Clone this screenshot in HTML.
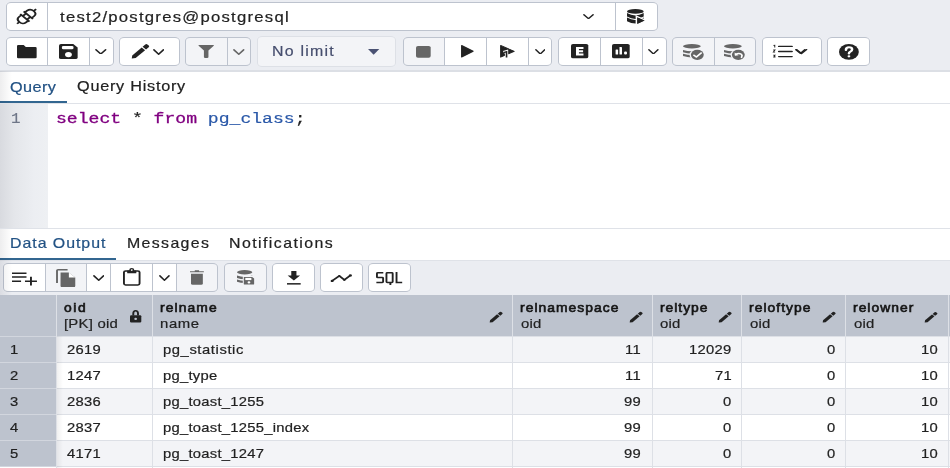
<!DOCTYPE html>
<html><head><meta charset="utf-8"><style>
html,body{margin:0;padding:0;}
body{width:950px;height:468px;overflow:hidden;position:relative;background:#fff;}
body>div,body>svg,body>p{position:absolute;box-sizing:border-box;margin:0;}
body>p{white-space:pre;transform-origin:0 0;will-change:transform;-webkit-text-stroke:0.2px currentColor;}
</style></head><body>
<div style="left:0.00px;top:0.00px;width:950.00px;height:72.00px;background:#ebedf2;border-bottom:2px solid #dcdfe5"></div>
<div style="left:0.00px;top:72.00px;width:950.00px;height:32.00px;background:#fff;border-bottom:1px solid #dfe2e8"></div>
<div style="left:0.00px;top:101.00px;width:67.00px;height:2.00px;background:#326690"></div>
<div style="left:0.00px;top:104.00px;width:950.00px;height:124.50px;background:#fff;border-bottom:1px solid #dfe2e8"></div>
<div style="left:0.00px;top:104.00px;width:48.00px;height:124.00px;background:linear-gradient(to right,#d8dadf 0px,#e4e6ea 14px,#eceef2 34px,#eef0f3 48px)"></div>
<div style="left:0.00px;top:228.50px;width:950.00px;height:32.50px;background:#fff;border-bottom:1px solid #dfe2e8"></div>
<div style="left:0.00px;top:258.20px;width:116.00px;height:1.80px;background:#326690"></div>
<div style="left:0.00px;top:261.00px;width:950.00px;height:34.30px;background:#ebedf2"></div>
<div style="left:5.50px;top:2.00px;width:42.00px;height:29.00px;background:#fff;border-top-left-radius:5px 4px;border-bottom-left-radius:5px 4px;"></div>
<div style="left:47.50px;top:2.00px;width:567.90px;height:29.00px;background:#fff;"></div>
<div style="left:615.40px;top:2.00px;width:42.40px;height:29.00px;background:#fff;border-top-right-radius:5px 4px;border-bottom-right-radius:5px 4px;"></div>
<div style="left:5.50px;top:2.00px;width:652.30px;height:29.00px;border:1px solid #bdc3ce;border-radius:5px/4px"></div>
<div style="left:47.00px;top:2.00px;width:1.00px;height:29.00px;background:#bdc3ce"></div>
<div style="left:614.90px;top:2.00px;width:1.00px;height:29.00px;background:#bdc3ce"></div>
<div style="left:5.70px;top:37.00px;width:41.60px;height:29.00px;background:#fff;border-top-left-radius:5px 4px;border-bottom-left-radius:5px 4px;"></div>
<div style="left:47.30px;top:37.00px;width:42.00px;height:29.00px;background:#fff;"></div>
<div style="left:89.30px;top:37.00px;width:24.50px;height:29.00px;background:#fff;border-top-right-radius:5px 4px;border-bottom-right-radius:5px 4px;"></div>
<div style="left:5.70px;top:37.00px;width:108.10px;height:29.00px;border:1px solid #bdc3ce;border-radius:5px/4px"></div>
<div style="left:46.80px;top:37.00px;width:1.00px;height:29.00px;background:#bdc3ce"></div>
<div style="left:88.80px;top:37.00px;width:1.00px;height:29.00px;background:#bdc3ce"></div>
<div style="left:119.20px;top:37.00px;width:60.60px;height:29.00px;background:#fff;border-radius:5px/4px;"></div>
<div style="left:119.20px;top:37.00px;width:60.60px;height:29.00px;border:1px solid #bdc3ce;border-radius:5px/4px"></div>
<div style="left:185.00px;top:37.00px;width:42.00px;height:29.00px;background:#f3f4f7;border-top-left-radius:5px 4px;border-bottom-left-radius:5px 4px;"></div>
<div style="left:227.00px;top:37.00px;width:24.00px;height:29.00px;background:#f3f4f7;border-top-right-radius:5px 4px;border-bottom-right-radius:5px 4px;"></div>
<div style="left:185.00px;top:37.00px;width:66.00px;height:29.00px;border:1px solid #bdc3ce;border-radius:5px/4px"></div>
<div style="left:226.50px;top:37.00px;width:1.00px;height:29.00px;background:#bdc3ce"></div>
<div style="left:257.10px;top:36.00px;width:139.40px;height:31.00px;background:#f3f4f7;border-radius:5px/4px;"></div>
<div style="left:257.10px;top:36.00px;width:139.40px;height:31.00px;border:1px solid #dde0e6;border-radius:5px/4px"></div>
<div style="left:402.80px;top:37.00px;width:41.60px;height:29.00px;background:#f3f4f7;border-top-left-radius:5px 4px;border-bottom-left-radius:5px 4px;"></div>
<div style="left:444.40px;top:37.00px;width:42.10px;height:29.00px;background:#fff;"></div>
<div style="left:486.50px;top:37.00px;width:42.00px;height:29.00px;background:#fff;"></div>
<div style="left:528.50px;top:37.00px;width:23.70px;height:29.00px;background:#fff;border-top-right-radius:5px 4px;border-bottom-right-radius:5px 4px;"></div>
<div style="left:402.80px;top:37.00px;width:149.40px;height:29.00px;border:1px solid #bdc3ce;border-radius:5px/4px"></div>
<div style="left:443.90px;top:37.00px;width:1.00px;height:29.00px;background:#bdc3ce"></div>
<div style="left:486.00px;top:37.00px;width:1.00px;height:29.00px;background:#bdc3ce"></div>
<div style="left:528.00px;top:37.00px;width:1.00px;height:29.00px;background:#bdc3ce"></div>
<div style="left:558.00px;top:37.00px;width:42.20px;height:29.00px;background:#fff;border-top-left-radius:5px 4px;border-bottom-left-radius:5px 4px;"></div>
<div style="left:600.20px;top:37.00px;width:41.90px;height:29.00px;background:#fff;"></div>
<div style="left:642.10px;top:37.00px;width:24.40px;height:29.00px;background:#fff;border-top-right-radius:5px 4px;border-bottom-right-radius:5px 4px;"></div>
<div style="left:558.00px;top:37.00px;width:108.50px;height:29.00px;border:1px solid #bdc3ce;border-radius:5px/4px"></div>
<div style="left:599.70px;top:37.00px;width:1.00px;height:29.00px;background:#bdc3ce"></div>
<div style="left:641.60px;top:37.00px;width:1.00px;height:29.00px;background:#bdc3ce"></div>
<div style="left:672.20px;top:37.00px;width:41.80px;height:29.00px;background:#f3f4f7;border-top-left-radius:5px 4px;border-bottom-left-radius:5px 4px;"></div>
<div style="left:714.00px;top:37.00px;width:42.20px;height:29.00px;background:#f3f4f7;border-top-right-radius:5px 4px;border-bottom-right-radius:5px 4px;"></div>
<div style="left:672.20px;top:37.00px;width:84.00px;height:29.00px;border:1px solid #bdc3ce;border-radius:5px/4px"></div>
<div style="left:713.50px;top:37.00px;width:1.00px;height:29.00px;background:#bdc3ce"></div>
<div style="left:761.60px;top:37.00px;width:60.40px;height:29.00px;background:#fff;border-radius:5px/4px;"></div>
<div style="left:761.60px;top:37.00px;width:60.40px;height:29.00px;border:1px solid #bdc3ce;border-radius:5px/4px"></div>
<div style="left:826.90px;top:37.00px;width:43.10px;height:29.00px;background:#fff;border-radius:5px/4px;"></div>
<div style="left:826.90px;top:37.00px;width:43.10px;height:29.00px;border:1px solid #bdc3ce;border-radius:5px/4px"></div>
<div style="left:2.90px;top:263.00px;width:42.10px;height:29.00px;background:#fff;border-top-left-radius:5px 4px;border-bottom-left-radius:5px 4px;"></div>
<div style="left:45.00px;top:263.00px;width:41.60px;height:29.00px;background:#f3f4f7;"></div>
<div style="left:86.60px;top:263.00px;width:23.80px;height:29.00px;background:#fff;"></div>
<div style="left:110.40px;top:263.00px;width:42.10px;height:29.00px;background:#fff;"></div>
<div style="left:152.50px;top:263.00px;width:24.20px;height:29.00px;background:#fff;"></div>
<div style="left:176.70px;top:263.00px;width:41.40px;height:29.00px;background:#f3f4f7;border-top-right-radius:5px 4px;border-bottom-right-radius:5px 4px;"></div>
<div style="left:2.90px;top:263.00px;width:215.20px;height:29.00px;border:1px solid #bdc3ce;border-radius:5px/4px"></div>
<div style="left:44.50px;top:263.00px;width:1.00px;height:29.00px;background:#bdc3ce"></div>
<div style="left:86.10px;top:263.00px;width:1.00px;height:29.00px;background:#bdc3ce"></div>
<div style="left:109.90px;top:263.00px;width:1.00px;height:29.00px;background:#bdc3ce"></div>
<div style="left:152.00px;top:263.00px;width:1.00px;height:29.00px;background:#bdc3ce"></div>
<div style="left:176.20px;top:263.00px;width:1.00px;height:29.00px;background:#bdc3ce"></div>
<div style="left:224.00px;top:263.00px;width:42.90px;height:29.00px;background:#f3f4f7;border-radius:5px/4px;"></div>
<div style="left:224.00px;top:263.00px;width:42.90px;height:29.00px;border:1px solid #bdc3ce;border-radius:5px/4px"></div>
<div style="left:271.70px;top:263.00px;width:43.20px;height:29.00px;background:#fff;border-radius:5px/4px;"></div>
<div style="left:271.70px;top:263.00px;width:43.20px;height:29.00px;border:1px solid #bdc3ce;border-radius:5px/4px"></div>
<div style="left:320.00px;top:263.00px;width:42.90px;height:29.00px;background:#fff;border-radius:5px/4px;"></div>
<div style="left:320.00px;top:263.00px;width:42.90px;height:29.00px;border:1px solid #bdc3ce;border-radius:5px/4px"></div>
<div style="left:367.70px;top:263.00px;width:43.20px;height:29.00px;background:#fff;border-radius:5px/4px;"></div>
<div style="left:367.70px;top:263.00px;width:43.20px;height:29.00px;border:1px solid #bdc3ce;border-radius:5px/4px"></div>
<div style="left:0.00px;top:295.30px;width:950.00px;height:40.70px;background:#bdc3ce"></div>
<div style="left:56.00px;top:337.00px;width:894.00px;height:26.00px;background:#f3f4f7"></div>
<div style="left:0.00px;top:337.00px;width:56.00px;height:26.00px;background:#bdc3ce"></div>
<div style="left:56.00px;top:363.00px;width:894.00px;height:26.00px;background:#fff"></div>
<div style="left:0.00px;top:363.00px;width:56.00px;height:26.00px;background:#bdc3ce"></div>
<div style="left:56.00px;top:389.00px;width:894.00px;height:26.00px;background:#f3f4f7"></div>
<div style="left:0.00px;top:389.00px;width:56.00px;height:26.00px;background:#bdc3ce"></div>
<div style="left:56.00px;top:415.00px;width:894.00px;height:26.00px;background:#fff"></div>
<div style="left:0.00px;top:415.00px;width:56.00px;height:26.00px;background:#bdc3ce"></div>
<div style="left:56.00px;top:441.00px;width:894.00px;height:26.00px;background:#f3f4f7"></div>
<div style="left:0.00px;top:441.00px;width:56.00px;height:26.00px;background:#bdc3ce"></div>
<div style="left:56.00px;top:335.50px;width:894.00px;height:1.00px;background:#dde0e6"></div>
<div style="left:0.00px;top:335.50px;width:56.00px;height:1.00px;background:#d2d6de"></div>
<div style="left:56.00px;top:361.50px;width:894.00px;height:1.00px;background:#dde0e6"></div>
<div style="left:0.00px;top:361.50px;width:56.00px;height:1.00px;background:#d2d6de"></div>
<div style="left:56.00px;top:387.50px;width:894.00px;height:1.00px;background:#dde0e6"></div>
<div style="left:0.00px;top:387.50px;width:56.00px;height:1.00px;background:#d2d6de"></div>
<div style="left:56.00px;top:413.50px;width:894.00px;height:1.00px;background:#dde0e6"></div>
<div style="left:0.00px;top:413.50px;width:56.00px;height:1.00px;background:#d2d6de"></div>
<div style="left:56.00px;top:439.50px;width:894.00px;height:1.00px;background:#dde0e6"></div>
<div style="left:0.00px;top:439.50px;width:56.00px;height:1.00px;background:#d2d6de"></div>
<div style="left:56.00px;top:465.50px;width:894.00px;height:1.00px;background:#dde0e6"></div>
<div style="left:0.00px;top:465.50px;width:56.00px;height:1.00px;background:#d2d6de"></div>
<div style="left:55.50px;top:295.30px;width:1.00px;height:172.70px;background:#dde0e6"></div>
<div style="left:152.00px;top:295.30px;width:1.00px;height:172.70px;background:#dde0e6"></div>
<div style="left:512.20px;top:295.30px;width:1.00px;height:172.70px;background:#dde0e6"></div>
<div style="left:652.20px;top:295.30px;width:1.00px;height:172.70px;background:#dde0e6"></div>
<div style="left:741.10px;top:295.30px;width:1.00px;height:172.70px;background:#dde0e6"></div>
<div style="left:845.10px;top:295.30px;width:1.00px;height:172.70px;background:#dde0e6"></div>
<div style="left:947.50px;top:295.30px;width:1.00px;height:172.70px;background:#dde0e6"></div>
<div style="left:56.50px;top:336.00px;width:6.50px;height:132.00px;background:linear-gradient(to right,rgba(0,0,0,0.06),rgba(0,0,0,0))"></div>
<div style="left:0.00px;top:71.30px;width:12.00px;height:32.20px;background:linear-gradient(to right,rgba(0,0,20,0.07),rgba(0,0,0,0))"></div>
<div style="left:0.00px;top:229.00px;width:12.00px;height:66.30px;background:linear-gradient(to right,rgba(0,0,20,0.07),rgba(0,0,0,0))"></div>
<p style="left:59.72px;top:9.90px;font:400 14.9px 'Liberation Sans', sans-serif;line-height:14.9px;color:#222222;letter-spacing:1.116px;transform:scaleX(1.1200)">test2/postgres@postgresql</p>
<p style="left:271.84px;top:43.90px;font:400 14.2px 'Liberation Sans', sans-serif;line-height:14.2px;color:#464e6e;letter-spacing:1.115px;transform:scaleX(1.1200)">No limit</p>
<p style="left:10.10px;top:79.50px;font:400 14.5px 'Liberation Sans', sans-serif;line-height:14.5px;color:#225284;letter-spacing:0.371px;transform:scaleX(1.1200)">Query</p>
<p style="left:77.10px;top:79.20px;font:400 14.5px 'Liberation Sans', sans-serif;line-height:14.5px;color:#222222;letter-spacing:0.665px;transform:scaleX(1.1200)">Query History</p>
<p style="left:10.44px;top:236.20px;font:400 14.2px 'Liberation Sans', sans-serif;line-height:14.2px;color:#225284;letter-spacing:0.864px;transform:scaleX(1.1200)">Data Output</p>
<p style="left:126.74px;top:236.20px;font:400 14.2px 'Liberation Sans', sans-serif;line-height:14.2px;color:#222222;letter-spacing:1.212px;transform:scaleX(1.1200)">Messages</p>
<p style="left:229.04px;top:236.20px;font:400 14.2px 'Liberation Sans', sans-serif;line-height:14.2px;color:#222222;letter-spacing:1.284px;transform:scaleX(1.1200)">Notifications</p>
<p style="left:11.25px;top:112.10px;font:400 15.5px 'Liberation Mono', monospace;line-height:15.5px;color:#6e7687;transform:scaleX(1.0267)">1</p>
<p style="left:55.94px;top:112.10px;font:400 15.5px 'Liberation Mono', monospace;line-height:15.5px;color:#222222;transform:scaleX(1.1660)"><span style="color:#800080;-webkit-text-stroke:0.3px #800080">select</span> * <span style="color:#800080;-webkit-text-stroke:0.3px #800080">from</span> <span style="color:#2a58a8">pg_class</span>;</p>
<p style="left:64.49px;top:300.60px;font:400 13.6px 'Liberation Sans', sans-serif;line-height:13.6px;color:#151515;letter-spacing:1.527px;-webkit-text-stroke:0.65px #151515;transform:scaleX(1.0200)">oid</p>
<p style="left:64.02px;top:317.00px;font:400 13.3px 'Liberation Sans', sans-serif;line-height:13.3px;color:#222222;letter-spacing:0.196px;transform:scaleX(1.1200)">[PK] oid</p>
<p style="left:160.01px;top:300.60px;font:400 13.6px 'Liberation Sans', sans-serif;line-height:13.6px;color:#151515;letter-spacing:1.066px;-webkit-text-stroke:0.65px #151515;transform:scaleX(1.0200)">relname</p>
<p style="left:159.92px;top:317.00px;font:400 13.3px 'Liberation Sans', sans-serif;line-height:13.3px;color:#222222;letter-spacing:0.565px;transform:scaleX(1.1200)">name</p>
<p style="left:520.41px;top:300.60px;font:400 13.6px 'Liberation Sans', sans-serif;line-height:13.6px;color:#151515;letter-spacing:1.018px;-webkit-text-stroke:0.65px #151515;transform:scaleX(1.0200)">relnamespace</p>
<p style="left:520.74px;top:317.00px;font:400 13.3px 'Liberation Sans', sans-serif;line-height:13.3px;color:#222222;letter-spacing:0.133px;transform:scaleX(1.1200)">oid</p>
<p style="left:660.11px;top:300.60px;font:400 13.6px 'Liberation Sans', sans-serif;line-height:13.6px;color:#151515;letter-spacing:0.954px;-webkit-text-stroke:0.65px #151515;transform:scaleX(1.0200)">reltype</p>
<p style="left:660.44px;top:317.00px;font:400 13.3px 'Liberation Sans', sans-serif;line-height:13.3px;color:#222222;letter-spacing:0.133px;transform:scaleX(1.1200)">oid</p>
<p style="left:749.41px;top:300.60px;font:400 13.6px 'Liberation Sans', sans-serif;line-height:13.6px;color:#151515;letter-spacing:1.018px;-webkit-text-stroke:0.65px #151515;transform:scaleX(1.0200)">reloftype</p>
<p style="left:749.74px;top:317.00px;font:400 13.3px 'Liberation Sans', sans-serif;line-height:13.3px;color:#222222;letter-spacing:0.133px;transform:scaleX(1.1200)">oid</p>
<p style="left:853.21px;top:300.60px;font:400 13.6px 'Liberation Sans', sans-serif;line-height:13.6px;color:#151515;letter-spacing:1.002px;-webkit-text-stroke:0.65px #151515;transform:scaleX(1.0200)">relowner</p>
<p style="left:853.54px;top:317.00px;font:400 13.3px 'Liberation Sans', sans-serif;line-height:13.3px;color:#222222;letter-spacing:0.133px;transform:scaleX(1.1200)">oid</p>
<p style="left:9.98px;top:342.70px;font:400 13.2px 'Liberation Sans', sans-serif;line-height:13.2px;color:#222222;letter-spacing:0.236px;transform:scaleX(1.1200)">1</p>
<p style="left:66.90px;top:342.70px;font:400 13.2px 'Liberation Sans', sans-serif;line-height:13.2px;color:#222222;letter-spacing:0.236px;transform:scaleX(1.1200)">2619</p>
<p style="left:162.72px;top:342.70px;font:400 13.2px 'Liberation Sans', sans-serif;line-height:13.2px;color:#222222;letter-spacing:0.523px;transform:scaleX(1.1200)">pg_statistic</p>
<p style="left:625.04px;top:342.70px;font:400 13.2px 'Liberation Sans', sans-serif;line-height:13.2px;color:#222222;letter-spacing:0.236px;transform:scaleX(1.1200)">11</p>
<p style="left:688.98px;top:342.70px;font:400 13.2px 'Liberation Sans', sans-serif;line-height:13.2px;color:#222222;letter-spacing:0.236px;transform:scaleX(1.1200)">12029</p>
<p style="left:826.70px;top:342.70px;font:400 13.2px 'Liberation Sans', sans-serif;line-height:13.2px;color:#222222;letter-spacing:0.236px;transform:scaleX(1.1200)">0</p>
<p style="left:920.62px;top:342.70px;font:400 13.2px 'Liberation Sans', sans-serif;line-height:13.2px;color:#222222;letter-spacing:0.236px;transform:scaleX(1.1200)">10</p>
<p style="left:9.98px;top:368.70px;font:400 13.2px 'Liberation Sans', sans-serif;line-height:13.2px;color:#222222;letter-spacing:0.236px;transform:scaleX(1.1200)">2</p>
<p style="left:66.90px;top:368.70px;font:400 13.2px 'Liberation Sans', sans-serif;line-height:13.2px;color:#222222;letter-spacing:0.236px;transform:scaleX(1.1200)">1247</p>
<p style="left:162.72px;top:368.70px;font:400 13.2px 'Liberation Sans', sans-serif;line-height:13.2px;color:#222222;letter-spacing:0.236px;transform:scaleX(1.1200)">pg_type</p>
<p style="left:625.04px;top:368.70px;font:400 13.2px 'Liberation Sans', sans-serif;line-height:13.2px;color:#222222;letter-spacing:0.236px;transform:scaleX(1.1200)">11</p>
<p style="left:714.56px;top:368.70px;font:400 13.2px 'Liberation Sans', sans-serif;line-height:13.2px;color:#222222;letter-spacing:0.236px;transform:scaleX(1.1200)">71</p>
<p style="left:826.70px;top:368.70px;font:400 13.2px 'Liberation Sans', sans-serif;line-height:13.2px;color:#222222;letter-spacing:0.236px;transform:scaleX(1.1200)">0</p>
<p style="left:920.62px;top:368.70px;font:400 13.2px 'Liberation Sans', sans-serif;line-height:13.2px;color:#222222;letter-spacing:0.236px;transform:scaleX(1.1200)">10</p>
<p style="left:9.98px;top:394.70px;font:400 13.2px 'Liberation Sans', sans-serif;line-height:13.2px;color:#222222;letter-spacing:0.236px;transform:scaleX(1.1200)">3</p>
<p style="left:66.90px;top:394.70px;font:400 13.2px 'Liberation Sans', sans-serif;line-height:13.2px;color:#222222;letter-spacing:0.236px;transform:scaleX(1.1200)">2836</p>
<p style="left:162.72px;top:394.70px;font:400 13.2px 'Liberation Sans', sans-serif;line-height:13.2px;color:#222222;letter-spacing:0.236px;transform:scaleX(1.1200)">pg_toast_1255</p>
<p style="left:623.92px;top:394.70px;font:400 13.2px 'Liberation Sans', sans-serif;line-height:13.2px;color:#222222;letter-spacing:0.236px;transform:scaleX(1.1200)">99</p>
<p style="left:722.80px;top:394.70px;font:400 13.2px 'Liberation Sans', sans-serif;line-height:13.2px;color:#222222;letter-spacing:0.236px;transform:scaleX(1.1200)">0</p>
<p style="left:826.70px;top:394.70px;font:400 13.2px 'Liberation Sans', sans-serif;line-height:13.2px;color:#222222;letter-spacing:0.236px;transform:scaleX(1.1200)">0</p>
<p style="left:920.62px;top:394.70px;font:400 13.2px 'Liberation Sans', sans-serif;line-height:13.2px;color:#222222;letter-spacing:0.236px;transform:scaleX(1.1200)">10</p>
<p style="left:9.98px;top:420.70px;font:400 13.2px 'Liberation Sans', sans-serif;line-height:13.2px;color:#222222;letter-spacing:0.236px;transform:scaleX(1.1200)">4</p>
<p style="left:66.90px;top:420.70px;font:400 13.2px 'Liberation Sans', sans-serif;line-height:13.2px;color:#222222;letter-spacing:0.236px;transform:scaleX(1.1200)">2837</p>
<p style="left:162.72px;top:420.70px;font:400 13.2px 'Liberation Sans', sans-serif;line-height:13.2px;color:#222222;letter-spacing:0.236px;transform:scaleX(1.1200)">pg_toast_1255_index</p>
<p style="left:623.92px;top:420.70px;font:400 13.2px 'Liberation Sans', sans-serif;line-height:13.2px;color:#222222;letter-spacing:0.236px;transform:scaleX(1.1200)">99</p>
<p style="left:722.80px;top:420.70px;font:400 13.2px 'Liberation Sans', sans-serif;line-height:13.2px;color:#222222;letter-spacing:0.236px;transform:scaleX(1.1200)">0</p>
<p style="left:826.70px;top:420.70px;font:400 13.2px 'Liberation Sans', sans-serif;line-height:13.2px;color:#222222;letter-spacing:0.236px;transform:scaleX(1.1200)">0</p>
<p style="left:920.62px;top:420.70px;font:400 13.2px 'Liberation Sans', sans-serif;line-height:13.2px;color:#222222;letter-spacing:0.236px;transform:scaleX(1.1200)">10</p>
<p style="left:9.98px;top:446.70px;font:400 13.2px 'Liberation Sans', sans-serif;line-height:13.2px;color:#222222;letter-spacing:0.236px;transform:scaleX(1.1200)">5</p>
<p style="left:66.90px;top:446.70px;font:400 13.2px 'Liberation Sans', sans-serif;line-height:13.2px;color:#222222;letter-spacing:0.236px;transform:scaleX(1.1200)">4171</p>
<p style="left:162.72px;top:446.70px;font:400 13.2px 'Liberation Sans', sans-serif;line-height:13.2px;color:#222222;letter-spacing:0.236px;transform:scaleX(1.1200)">pg_toast_1247</p>
<p style="left:623.92px;top:446.70px;font:400 13.2px 'Liberation Sans', sans-serif;line-height:13.2px;color:#222222;letter-spacing:0.236px;transform:scaleX(1.1200)">99</p>
<p style="left:722.80px;top:446.70px;font:400 13.2px 'Liberation Sans', sans-serif;line-height:13.2px;color:#222222;letter-spacing:0.236px;transform:scaleX(1.1200)">0</p>
<p style="left:826.70px;top:446.70px;font:400 13.2px 'Liberation Sans', sans-serif;line-height:13.2px;color:#222222;letter-spacing:0.236px;transform:scaleX(1.1200)">0</p>
<p style="left:920.62px;top:446.70px;font:400 13.2px 'Liberation Sans', sans-serif;line-height:13.2px;color:#222222;letter-spacing:0.236px;transform:scaleX(1.1200)">10</p>
<svg style="left:582.90px;top:14.00px;width:11.00px;height:5.40px;" viewBox="0 0 12 7" preserveAspectRatio="none"><path d="M1 1 L6 6 L11 1" fill="none" stroke="#222" stroke-width="1.7" stroke-linecap="round" stroke-linejoin="round"/></svg>
<svg style="left:95.30px;top:48.70px;width:11.60px;height:5.80px;" viewBox="0 0 12 7" preserveAspectRatio="none"><path d="M1 1 L6 6 L11 1" fill="none" stroke="#222" stroke-width="1.7" stroke-linecap="round" stroke-linejoin="round"/></svg>
<svg style="left:152.60px;top:48.70px;width:11.30px;height:6.10px;" viewBox="0 0 12 7" preserveAspectRatio="none"><path d="M1 1 L6 6 L11 1" fill="none" stroke="#222" stroke-width="1.7" stroke-linecap="round" stroke-linejoin="round"/></svg>
<svg style="left:233.40px;top:48.70px;width:11.60px;height:6.10px;" viewBox="0 0 12 7" preserveAspectRatio="none"><path d="M1 1 L6 6 L11 1" fill="none" stroke="#666" stroke-width="1.7" stroke-linecap="round" stroke-linejoin="round"/></svg>
<svg style="left:534.60px;top:48.70px;width:10.60px;height:5.80px;" viewBox="0 0 12 7" preserveAspectRatio="none"><path d="M1 1 L6 6 L11 1" fill="none" stroke="#222" stroke-width="1.7" stroke-linecap="round" stroke-linejoin="round"/></svg>
<svg style="left:648.40px;top:48.60px;width:10.80px;height:5.70px;" viewBox="0 0 12 7" preserveAspectRatio="none"><path d="M1 1 L6 6 L11 1" fill="none" stroke="#222" stroke-width="1.7" stroke-linecap="round" stroke-linejoin="round"/></svg>
<svg style="left:795.40px;top:49.30px;width:10.60px;height:5.10px;" viewBox="0 0 12 7" preserveAspectRatio="none"><path d="M1 1 L6 6 L11 1" fill="none" stroke="#222" stroke-width="1.7" stroke-linecap="round" stroke-linejoin="round"/></svg>
<svg style="left:92.60px;top:274.70px;width:11.50px;height:6.10px;" viewBox="0 0 12 7" preserveAspectRatio="none"><path d="M1 1 L6 6 L11 1" fill="none" stroke="#222" stroke-width="1.7" stroke-linecap="round" stroke-linejoin="round"/></svg>
<svg style="left:158.90px;top:274.70px;width:10.90px;height:6.10px;" viewBox="0 0 12 7" preserveAspectRatio="none"><path d="M1 1 L6 6 L11 1" fill="none" stroke="#222" stroke-width="1.7" stroke-linecap="round" stroke-linejoin="round"/></svg>
<svg style="left:16.30px;top:8.40px;width:20.30px;height:16.20px;overflow:visible" viewBox="0 0 16.111 16.200" preserveAspectRatio="none"><g transform="translate(8.4,8.5) rotate(-44)" fill="none" stroke="#222" stroke-width="1.65" stroke-linecap="butt">
<path d="M1.9,-3.9 H4.4 Q7.9,-3.9 7.9,0 Q7.9,3.9 4.4,3.9 H1.9"/>
<path d="M-1.9,-3.9 H-4.4 Q-7.9,-3.9 -7.9,0 Q-7.9,3.9 -4.4,3.9 H-1.9"/>
<path d="M1.9,-5.3 V5.3 M-1.9,-5.3 V5.3 M-1.9,-2.4 H1.9 M-1.9,2.4 H1.9 M7.9,0 H10.5 M-7.9,0 H-10.5"/>
</g></svg>
<svg style="left:627.00px;top:8.70px;width:18.20px;height:15.60px;overflow:visible" viewBox="0 0 14.444 15.600" preserveAspectRatio="none"><ellipse cx="6.63" cy="2.4" rx="6.63" ry="2.4" fill="#222"/>
<path fill="#222" d="M0,4.0 Q6.63,8.8 13.26,4.0 V7.5 Q6.63,12.3 0,7.5 Z"/>
<path fill="#222" d="M0,8.6 Q6.63,13.4 13.26,8.6 V12.2 Q6.63,17 0,12.2 Z"/>
<path fill="#222" stroke="#fff" stroke-width="1.5" stroke-linejoin="miter" d="M7.6,7.3 L14.9,11.6 L7.6,15.9 Z"/>
<path fill="#222" d="M8.1,8.2 L14.1,11.6 L8.1,15 Z"/></svg>
<svg style="left:16.60px;top:44.70px;width:19.70px;height:13.30px;overflow:visible" viewBox="0 0 15.635 13.300" preserveAspectRatio="none"><path fill="#222" d="M1,0 H5.3 L7,1.9 H14.6 Q15.6,1.9 15.6,2.9 V12.3 Q15.6,13.3 14.6,13.3 H1 Q0,13.3 0,12.3 V1 Q0,0 1,0 Z"/></svg>
<svg style="left:58.80px;top:44.10px;width:18.60px;height:15.10px;overflow:visible" viewBox="0 0 14.762 15.100" preserveAspectRatio="none"><path fill="#222" d="M1.6,0 H11.3 L14.8,3.4 V13.4 Q14.8,15.1 13.2,15.1 H1.6 Q0,15.1 0,13.4 V1.6 Q0,0 1.6,0 Z"/>
<rect x="2.3" y="1.9" width="9.2" height="3.4" rx="1.2" fill="#fff"/>
<circle cx="7.5" cy="10.6" r="2.7" fill="#fff"/></svg>
<svg style="left:131.00px;top:43.90px;width:18.00px;height:15.20px;overflow:visible" viewBox="0 0 14.286 15.200" preserveAspectRatio="none"><g transform="translate(0.4,14.800) rotate(-46.5) scale(0.940)" fill="#222">
<path d="M0.3,0 L3,-2.0 H14.6 V2.0 H3 Z"/>
<path d="M15.7,-2.0 H19 Q20.3,-2.0 20.3,-0.8 V0.8 Q20.3,2.0 19,2.0 H15.7 Z"/></g></svg>
<svg style="left:198.00px;top:44.90px;width:16.40px;height:13.00px;overflow:visible" viewBox="0 0 13.016 13.000" preserveAspectRatio="none"><path fill="#666" d="M0.8,0 H12.2 Q13,0 12.5,0.7 L8.3,5.6 V12 Q8.3,13 7.3,13 H5.7 Q4.7,13 4.7,12 V5.6 L0.5,0.7 Q0,0 0.8,0 Z"/></svg>
<svg style="left:367.50px;top:49.00px;width:11.30px;height:5.70px;overflow:visible" viewBox="0 0 8.968 5.700" preserveAspectRatio="none"><path fill="#4a5273" d="M0,0 H8.97 L4.48,5.7 Z"/></svg>
<svg style="left:416.30px;top:45.50px;width:14.70px;height:11.70px;overflow:visible" viewBox="0 0 11.667 11.700" preserveAspectRatio="none"><rect x="0" y="0" width="11.67" height="11.7" rx="1.6" fill="#666"/></svg>
<svg style="left:460.70px;top:45.00px;width:12.70px;height:12.50px;overflow:visible" viewBox="0 0 10.079 12.500" preserveAspectRatio="none"><path fill="#222" stroke="#222" stroke-width="0.9" stroke-linejoin="round" d="M0.5,0.5 L9.6,6.25 L0.5,12 Z"/></svg>
<svg style="left:500.30px;top:45.00px;width:14.70px;height:12.60px;overflow:visible" viewBox="0 0 11.667 12.600" preserveAspectRatio="none"><path fill="#222" stroke="#222" stroke-width="0.8" stroke-linejoin="round" d="M0.5,0.4 L11.3,6.3 L0.5,12.2 Z"/>
<path fill="none" stroke="#fff" stroke-width="2.6" d="M2.8,7.3 L5.2,6.4 V13"/>
<path fill="none" stroke="#222" stroke-width="1.3" d="M2.8,7.6 L5.2,6.7 V12.6"/></svg>
<svg style="left:570.70px;top:44.20px;width:17.30px;height:14.30px;overflow:visible" viewBox="0 0 13.730 14.300" preserveAspectRatio="none"><rect x="0" y="0" width="13.73" height="14.3" rx="1.6" fill="#222"/>
<path fill="#fff" d="M3.97,2.9 H9.9 V5 H6.3 V6.2 H9.6 V8.2 H6.3 V9.5 H9.9 V11.5 H3.97 Z"/></svg>
<svg style="left:612.20px;top:44.20px;width:17.70px;height:14.30px;overflow:visible" viewBox="0 0 14.048 14.300" preserveAspectRatio="none"><rect x="0" y="0" width="14.05" height="14.3" rx="1.6" fill="#222"/>
<rect x="2.86" y="5.4" width="1.98" height="5" rx="0.5" fill="#fff"/>
<rect x="5.95" y="2.9" width="1.98" height="7.5" rx="0.5" fill="#fff"/>
<rect x="9.6" y="7.5" width="2.3" height="2.9" rx="0.9" fill="#fff"/></svg>
<svg style="left:682.90px;top:43.60px;width:22.68px;height:16.50px;overflow:visible" viewBox="0 0 18.000 16.500" preserveAspectRatio="none"><path fill="#666" d="M0,2.25 A7.06,2.25 0 0 1 14.12,2.25 A7.06,2.25 0 0 1 0,2.25 Z"/>
<path fill="#666" d="M0,5.9 Q7,8.6 14.12,5.9 V8.3 Q7,11 0,8.3 Z"/>
<path fill="#666" d="M0,9.7 Q7,12.4 14.12,9.7 V12.1 Q7,14.8 0,12.1 Z"/>
<circle cx="11.37" cy="10.8" r="6.2" fill="#f3f4f7"/>
<circle cx="11.37" cy="10.8" r="5.1" fill="#666"/><path d="M8.7,11.2 L10.6,13 L14.4,9" fill="none" stroke="#fff" stroke-width="1.5" stroke-linecap="round" stroke-linejoin="round"/></svg>
<svg style="left:724.20px;top:43.60px;width:22.68px;height:16.50px;overflow:visible" viewBox="0 0 18.000 16.500" preserveAspectRatio="none"><path fill="#666" d="M0,2.25 A7.06,2.25 0 0 1 14.12,2.25 A7.06,2.25 0 0 1 0,2.25 Z"/>
<path fill="#666" d="M0,5.9 Q7,8.6 14.12,5.9 V8.3 Q7,11 0,8.3 Z"/>
<path fill="#666" d="M0,9.7 Q7,12.4 14.12,9.7 V12.1 Q7,14.8 0,12.1 Z"/>
<circle cx="11.37" cy="10.8" r="6.2" fill="#f3f4f7"/>
<circle cx="11.37" cy="10.8" r="5.1" fill="#666"/><path d="M9.3,10.6 Q11.5,8.6 13.8,10.3 Q14.8,11.6 13.9,13.4" fill="none" stroke="#fff" stroke-width="1.4" stroke-linecap="round"/><path d="M8.4,8.5 L8.6,11.8 L11.6,11.3 Z" fill="#fff"/></svg>
<svg style="left:772.50px;top:45.00px;width:34.00px;height:12.50px;overflow:visible" viewBox="0 0 26.984 12.500" preserveAspectRatio="none"><g fill="none" stroke="#222">
<path d="M4.6,1.4 H15.1 M4.6,6.5 H15.1 M4.6,11.6 H15.1" stroke-width="1.4" stroke-linecap="round"/>
<path d="M0.3,0.4 L1.4,0.2 V2.4 M0.2,5 H1.6 L0.3,7.1 H1.7 M0.2,10.2 H1.6 L1,11 Q1.7,11.4 1.6,12 H0.2" stroke-width="0.8"/>
<path d="M18.6,4.6 L22.6,8.6 L26.6,4.6" stroke-width="1.35" stroke-linecap="round" stroke-linejoin="round"/>
</g></svg>
<svg style="left:838.70px;top:43.60px;width:19.80px;height:15.80px;overflow:visible" viewBox="0 0 15.714 15.800" preserveAspectRatio="none"><ellipse cx="7.86" cy="7.9" rx="7.86" ry="7.9" fill="#222"/>
<path d="M5.5,5.9 Q5.5,3.3 7.9,3.3 Q10.4,3.3 10.4,5.6 Q10.4,7 8.8,7.8 Q7.9,8.3 7.9,9.6" fill="none" stroke="#fff" stroke-width="2" stroke-linecap="round"/>
<circle cx="7.9" cy="12.3" r="1.15" fill="#fff"/></svg>
<svg style="left:11.50px;top:271.50px;width:25.00px;height:14.50px;overflow:visible" viewBox="0 0 19.841 14.500" preserveAspectRatio="none"><g stroke="#222" stroke-width="1.5" fill="none">
<path d="M0,1.2 H11.5 M0,5 H11.5 M0,9.3 H7.2"/>
<path d="M10.3,9.3 H19.8 M15.05,4.8 V13.6"/></g></svg>
<svg style="left:55.70px;top:268.70px;width:19.30px;height:18.10px;overflow:visible" viewBox="0 0 15.317 18.100" preserveAspectRatio="none"><path d="M0.8,14 V1.6 Q0.8,0.8 1.6,0.8 H9.2" fill="none" stroke="#666" stroke-width="1.5"/>
<path fill="#666" d="M3.6,3.6 H10 L15.3,8.5 V16.9 Q15.3,18.1 14.1,18.1 H4.8 Q3.6,18.1 3.6,16.9 Z"/>
<path fill="#fff" d="M10.2,3.6 L15.3,8.4 H10.2 Z"/></svg>
<svg style="left:122.60px;top:268.00px;width:17.50px;height:17.60px;overflow:visible" viewBox="0 0 13.889 17.600" preserveAspectRatio="none"><rect x="0.75" y="2.9" width="12.4" height="14" rx="1.3" fill="none" stroke="#222" stroke-width="1.5"/>
<rect x="3.3" y="2.4" width="7.3" height="2.8" rx="0.5" fill="#222"/>
<circle cx="6.95" cy="2.1" r="2.0" fill="#222"/><circle cx="6.95" cy="2.1" r="0.8" fill="#fff"/></svg>
<svg style="left:190.40px;top:270.20px;width:13.90px;height:14.80px;overflow:visible" viewBox="0 0 11.032 14.800" preserveAspectRatio="none"><path fill="#666" d="M0,1.2 H11 V2.3 H0 Z M3.8,0.2 H7.2 V1.3 H3.8 Z"/>
<path fill="#666" d="M0.8,3.7 H10.2 V13.5 Q10.2,14.8 8.9,14.8 H2.1 Q0.8,14.8 0.8,13.5 Z"/></svg>
<svg style="left:237.00px;top:270.10px;width:17.60px;height:14.90px;overflow:visible" viewBox="0 0 13.968 14.900" preserveAspectRatio="none"><path fill="#666" d="M0,2.2 A6.07,2.2 0 0 1 12.14,2.2 A6.07,2.2 0 0 1 0,2.2 Z"/>
<path fill="#666" d="M0,5.6 Q6,8.2 12.14,5.6 V8 Q6,10.6 0,8 Z"/>
<path fill="#666" d="M0,9.4 Q6,12 12.14,9.4 V11.8 Q6,14.4 0,11.8 Z"/>
<rect x="4.6" y="5.8" width="9.8" height="9.2" rx="1" fill="#f3f4f7"/>
<path fill="#666" d="M5.4,6.9 H12 L13.6,8.4 V13.9 Q13.6,14.6 12.9,14.6 H6.1 Q5.4,14.6 5.4,13.9 Z"/>
<rect x="6.6" y="7.9" width="4.8" height="2.2" fill="#fff"/>
<circle cx="9.5" cy="12.4" r="1.1" fill="#fff"/></svg>
<svg style="left:286.60px;top:270.60px;width:13.70px;height:13.60px;overflow:visible" viewBox="0 0 10.873 13.600" preserveAspectRatio="none"><path fill="#222" d="M3.4,0 H7.5 V4.4 H10.4 L5.45,9.6 L0.5,4.4 H3.4 Z"/>
<rect x="0" y="12.1" width="10.87" height="1.5" fill="#222"/></svg>
<svg style="left:331.00px;top:273.00px;width:20.50px;height:9.50px;overflow:visible" viewBox="0 0 16.270 9.500" preserveAspectRatio="none"><path d="M0.9,7.9 L6.6,2.9 L10.6,6.9 L15.4,2.4" fill="none" stroke="#222" stroke-width="1.5" stroke-linejoin="round"/>
<circle cx="0.9" cy="7.9" r="1.2" fill="#222"/><circle cx="15.4" cy="2.4" r="1.2" fill="#222"/>
<circle cx="6.6" cy="2.9" r="0.8" fill="#222"/><circle cx="10.6" cy="6.9" r="0.9" fill="#222"/></svg>
<svg style="left:376.10px;top:272.10px;width:26.20px;height:13.80px;overflow:visible" viewBox="0 0 20.794 13.800" preserveAspectRatio="none"><g fill="none" stroke="#222" stroke-width="1.5">
<path d="M5.8,0.75 H1.4 Q0.75,0.75 0.75,1.4 V4.9 Q0.75,5.55 1.4,5.55 H5 Q5.65,5.55 5.65,6.2 V9.8 Q5.65,10.4 5,10.4 H0.3"/>
<path d="M8.3,1.4 Q8.3,0.75 8.95,0.75 H12.6 Q13.25,0.75 13.25,1.4 V9.75 Q13.25,10.4 12.6,10.4 H8.95 Q8.3,10.4 8.3,9.75 Z M11.4,10.4 V13"/>
<path d="M16.3,0 V10.4 H20.8"/></g></svg>
<svg style="left:129.70px;top:309.90px;width:11.30px;height:12.50px;overflow:visible" viewBox="0 0 8.968 12.500" preserveAspectRatio="none"><path d="M2.6,5.6 V3.6 Q2.6,0.8 4.48,0.8 Q6.36,0.8 6.36,3.6 V5.6" fill="none" stroke="#222" stroke-width="1.5"/>
<rect x="0" y="5.3" width="8.97" height="7.2" rx="1" fill="#222"/>
<circle cx="4.48" cy="8.9" r="1.1" fill="#bdc3ce"/></svg>
<svg style="left:488.80px;top:312.20px;width:13.70px;height:11.10px;overflow:visible" viewBox="0 0 10.873 11.100" preserveAspectRatio="none"><g transform="translate(0.4,10.700) rotate(-46.5) scale(0.700)" fill="#222">
<path d="M0.3,0 L3,-2.0 H14.6 V2.0 H3 Z"/>
<path d="M15.7,-2.0 H19 Q20.3,-2.0 20.3,-0.8 V0.8 Q20.3,2.0 19,2.0 H15.7 Z"/></g></svg>
<svg style="left:628.80px;top:312.20px;width:13.70px;height:11.10px;overflow:visible" viewBox="0 0 10.873 11.100" preserveAspectRatio="none"><g transform="translate(0.4,10.700) rotate(-46.5) scale(0.700)" fill="#222">
<path d="M0.3,0 L3,-2.0 H14.6 V2.0 H3 Z"/>
<path d="M15.7,-2.0 H19 Q20.3,-2.0 20.3,-0.8 V0.8 Q20.3,2.0 19,2.0 H15.7 Z"/></g></svg>
<svg style="left:718.00px;top:312.20px;width:13.70px;height:11.10px;overflow:visible" viewBox="0 0 10.873 11.100" preserveAspectRatio="none"><g transform="translate(0.4,10.700) rotate(-46.5) scale(0.700)" fill="#222">
<path d="M0.3,0 L3,-2.0 H14.6 V2.0 H3 Z"/>
<path d="M15.7,-2.0 H19 Q20.3,-2.0 20.3,-0.8 V0.8 Q20.3,2.0 19,2.0 H15.7 Z"/></g></svg>
<svg style="left:821.60px;top:312.20px;width:13.70px;height:11.10px;overflow:visible" viewBox="0 0 10.873 11.100" preserveAspectRatio="none"><g transform="translate(0.4,10.700) rotate(-46.5) scale(0.700)" fill="#222">
<path d="M0.3,0 L3,-2.0 H14.6 V2.0 H3 Z"/>
<path d="M15.7,-2.0 H19 Q20.3,-2.0 20.3,-0.8 V0.8 Q20.3,2.0 19,2.0 H15.7 Z"/></g></svg>
<svg style="left:924.20px;top:312.20px;width:13.20px;height:11.10px;overflow:visible" viewBox="0 0 10.476 11.100" preserveAspectRatio="none"><g transform="translate(0.4,10.700) rotate(-46.5) scale(0.688)" fill="#222">
<path d="M0.3,0 L3,-2.0 H14.6 V2.0 H3 Z"/>
<path d="M15.7,-2.0 H19 Q20.3,-2.0 20.3,-0.8 V0.8 Q20.3,2.0 19,2.0 H15.7 Z"/></g></svg>
</body></html>
